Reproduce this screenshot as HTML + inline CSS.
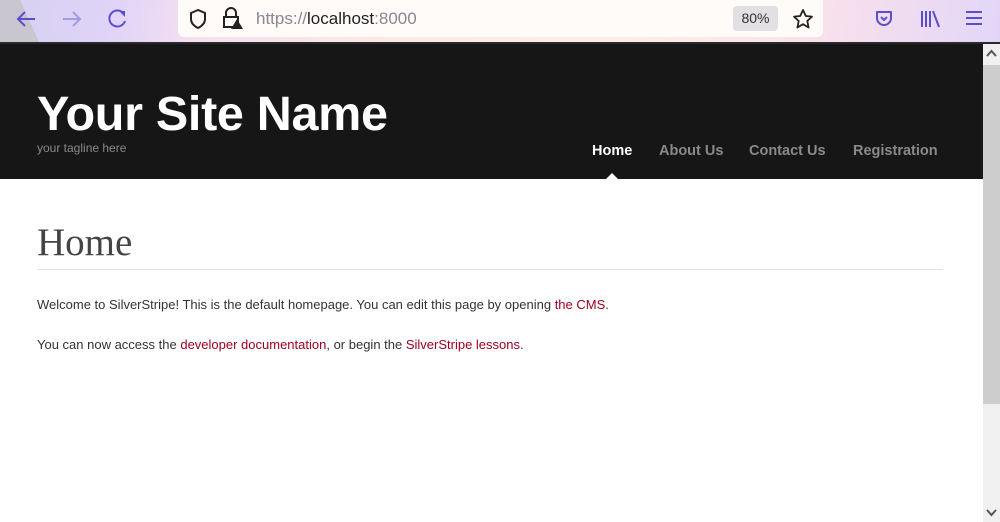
<!DOCTYPE html>
<html><head><style>
*{margin:0;padding:0;box-sizing:border-box}
body{width:1000px;height:522px;overflow:hidden;background:#fff;font-family:"Liberation Sans",sans-serif;position:relative}
.tb{position:absolute;left:0;top:0;width:1000px;height:44px;background:linear-gradient(100deg,#d6d0f0 0%,#e0d4f8 12%,#f6e0f0 20%,#fde8e4 40%,#fdefe6 60%,#fbe2ea 80%,#e2d6f8 100%)}
.tb .g{position:absolute;left:0;top:0;width:40px;height:44px;background:#c9c6cf;clip-path:polygon(0 0,20px 0,40px 44px,0 44px)}
.url{position:absolute;left:178px;top:0;width:645px;height:37px;background:#fefbf8;border-radius:0 0 6px 6px}
.url span.t{position:absolute;left:78px;top:9px;font-size:17px;color:#8a8790}
.url span.t b{font-weight:normal;color:#222}
.zoom{position:absolute;left:733px;top:6px;width:45px;height:25px;background:#e3e0e3;border-radius:4px;font-size:14px;color:#333;text-align:center;line-height:25px}
.line{position:absolute;left:0;top:42px;width:1000px;height:2px;background:#2a2a2a}
.hdr{position:absolute;left:0;top:44px;width:983px;height:135px;background:#161616}
.hdr h1{position:absolute;left:37px;top:42px;font-size:48.5px;color:#fff;font-weight:bold;letter-spacing:-0.3px}
.hdr .tag{position:absolute;left:37px;top:97px;font-size:12px;color:#8a8a8a}
.nav{position:absolute;top:99px;font-size:14.5px;font-weight:bold;color:#8a8a8a}
.arrow{position:absolute;left:606px;top:173px;width:0;height:0;border-left:6px solid transparent;border-right:6px solid transparent;border-bottom:6px solid #fff}
h2{position:absolute;left:37px;top:220px;font-family:"Liberation Serif",serif;font-weight:normal;font-size:39px;color:#444}
.hr{position:absolute;left:37px;top:269px;width:906px;height:1px;background:#e2e2e2}
p{position:absolute;left:37px;font-size:13px;color:#333}
a{color:#a00020;text-decoration:none}
.sb{position:absolute;left:983px;top:44px;width:17px;height:478px;background:#f0f0f0}
.th{position:absolute;left:983px;top:65px;width:17px;height:339px;background:#cdcdcd}
</style></head><body>
<div class="tb"><div class="g"></div>
<svg style="position:absolute;left:15px;top:9px" width="22" height="20" viewBox="0 0 22 20"><path d="M20 10H3M10 3L3 10L10 17" fill="none" stroke="#5c4dd0" stroke-width="2"/></svg>
<svg style="position:absolute;left:61px;top:9px" width="22" height="20" viewBox="0 0 22 20"><path d="M2 10H19M12 3L19 10L12 17" fill="none" stroke="#a49ae8" stroke-width="2"/></svg>
<svg style="position:absolute;left:107px;top:8px" width="22" height="22" viewBox="0 0 22 22"><path d="M17 6A8 8 0 1 0 18 13" fill="none" stroke="#5c4dd0" stroke-width="2"/><path d="M12 3H18V9Z" fill="#5c4dd0"/></svg>
<div class="url">
<svg style="position:absolute;left:10px;top:8px" width="20" height="22" viewBox="0 0 20 22"><path d="M10 2L3 5V11C3 15 6 18 10 20C14 18 17 15 17 11V5Z" fill="none" stroke="#222" stroke-width="2"/></svg>
<svg style="position:absolute;left:43px;top:7px" width="24" height="24" viewBox="0 0 24 24"><path d="M5 10V6A5 5 0 0 1 15 6V10M3 10H17V20H3Z" fill="none" stroke="#222" stroke-width="2"/><path d="M16 12L22 22H10Z" fill="#222"/></svg>
<span class="t">https://<b>localhost</b>:8000</span></div>
<div class="zoom">80%</div>
<svg style="position:absolute;left:792px;top:8px" width="22" height="22" viewBox="0 0 22 22"><path d="M11 2L13.8 8L20 8.6L15.3 13L16.6 19.5L11 16.2L5.4 19.5L6.7 13L2 8.6L8.2 8Z" fill="none" stroke="#222" stroke-width="1.8" stroke-linejoin="round"/></svg>
<svg style="position:absolute;left:874px;top:9px" width="20" height="20" viewBox="0 0 20 20"><path d="M3 3H17V9A7 7 0 0 1 3 9Z" fill="none" stroke="#5c4dd0" stroke-width="2" stroke-linejoin="round"/><path d="M7 8L10 11L13 8" fill="none" stroke="#5c4dd0" stroke-width="2"/></svg>
<svg style="position:absolute;left:920px;top:9px" width="20" height="20" viewBox="0 0 20 20"><path d="M2 2V18M6 2V18M10 2V18M13 2L19 18" fill="none" stroke="#5c4dd0" stroke-width="2"/></svg>
<svg style="position:absolute;left:965px;top:10px" width="18" height="16" viewBox="0 0 18 16"><path d="M1 2H17M1 8H17M1 14H17" stroke="#5c4dd0" stroke-width="2"/></svg>
</div>
<div class="line"></div>
<div class="hdr"><h1>Your Site Name</h1><div class="tag">your tagline here</div>
<span class="nav" style="left:592px;color:#fff">Home</span>
<span class="nav" style="left:659px">About Us</span>
<span class="nav" style="left:749px">Contact Us</span>
<span class="nav" style="left:853px">Registration</span>
</div>
<div class="arrow"></div>
<h2>Home</h2>
<div class="hr"></div>
<p style="top:297px">Welcome to SilverStripe! This is the default homepage. You can edit this page by opening <a>the CMS</a>.</p>
<p style="top:337px">You can now access the <a>developer documentation</a>, or begin the <a>SilverStripe lessons</a>.</p>
<div class="sb"></div><div class="th"></div>
<svg style="position:absolute;left:986px;top:49px" width="11" height="8" viewBox="0 0 11 8"><path d="M1 7L5.5 2L10 7" fill="none" stroke="#555" stroke-width="2"/></svg>
<svg style="position:absolute;left:986px;top:509px" width="11" height="8" viewBox="0 0 11 8"><path d="M1 1L5.5 6L10 1" fill="none" stroke="#555" stroke-width="2"/></svg>
</body></html>
